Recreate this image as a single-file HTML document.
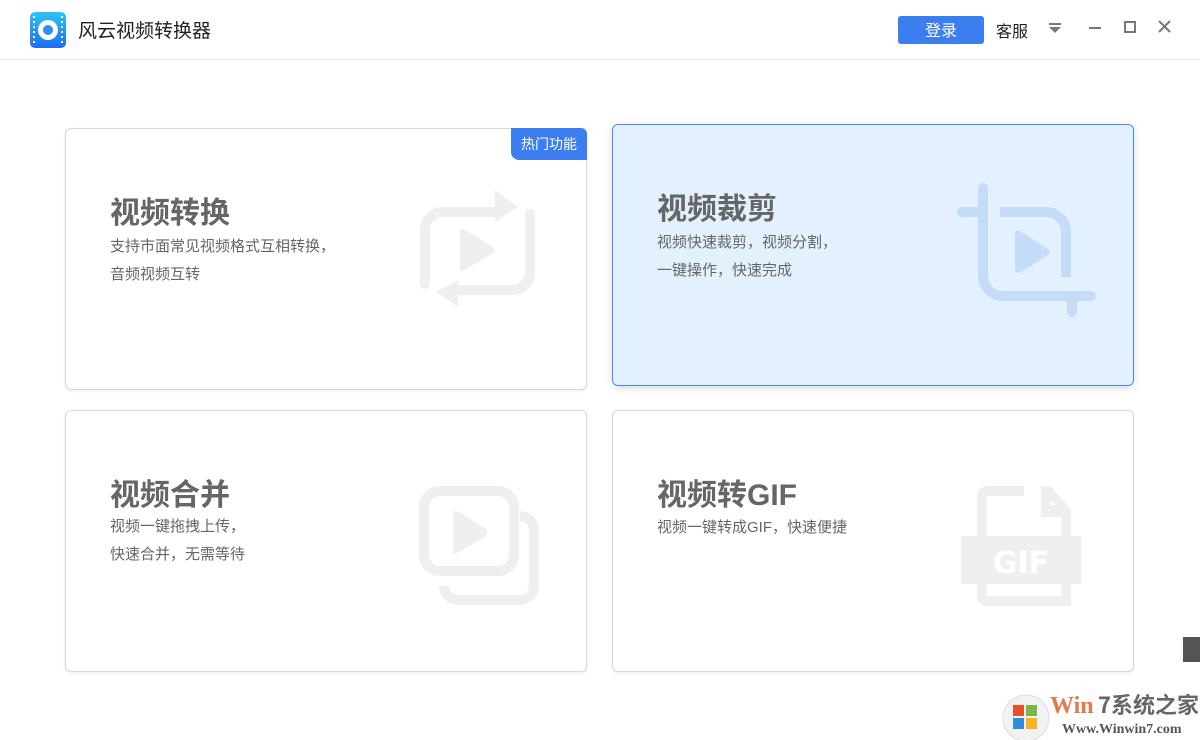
<!DOCTYPE html>
<html><head><meta charset="utf-8"><style>
*{margin:0;padding:0;box-sizing:border-box}
body{width:1200px;height:740px;background:#fff;position:relative;overflow:hidden;font-family:"Liberation Sans","Noto Sans CJK SC",sans-serif;color:#666}
.hdr{position:absolute;left:0;top:0;width:1200px;height:60px;border-bottom:1px solid #ececec}
.card{position:absolute;width:522px;height:262px;border:1px solid #d8d8d8;border-radius:6px;background:#fff;box-shadow:0 1px 3px rgba(0,0,0,.08)}
.t{position:absolute;left:44px;font-size:30px;font-weight:bold;color:#666;letter-spacing:0}
.d{position:absolute;left:44px;font-size:15px;line-height:28px;color:#666}
svg{position:absolute;left:0;top:0}
</style></head><body>
<div class="hdr"></div>
<svg width="1200" height="740">
<defs><linearGradient id="lg" x1="0" y1="0" x2="0" y2="1"><stop offset="0" stop-color="#2fc3f5"/><stop offset="1" stop-color="#1f6cf0"/></linearGradient></defs>
<rect x="30" y="12" width="36" height="36" rx="5" fill="url(#lg)"/>
<g fill="#fff"><rect x="33" y="16" width="2" height="2"/><rect x="33" y="21" width="2" height="2"/><rect x="33" y="26" width="2" height="2"/><rect x="33" y="31" width="2" height="2"/><rect x="33" y="36" width="2" height="2"/><rect x="33" y="41" width="2" height="2"/>
<rect x="61" y="16" width="2" height="2"/><rect x="61" y="21" width="2" height="2"/><rect x="61" y="26" width="2" height="2"/><rect x="61" y="31" width="2" height="2"/><rect x="61" y="36" width="2" height="2"/><rect x="61" y="41" width="2" height="2"/></g>
<circle cx="48" cy="30" r="10" fill="#fff"/><circle cx="48" cy="30" r="5" fill="#2a90f2"/>
<text x="78" y="37" font-size="19" fill="#222" font-family="Liberation Sans,Noto Sans CJK SC,sans-serif">风云视频转换器</text>
<rect x="898" y="16" width="86" height="28" rx="3" fill="#3a7ef0"/>
<text x="941" y="36" font-size="16" fill="#fff" text-anchor="middle" font-family="Noto Sans CJK SC,sans-serif">登录</text>
<text x="996" y="37" font-size="16" fill="#222" font-family="Noto Sans CJK SC,sans-serif">客服</text>
<rect x="1049" y="23" width="12" height="2" fill="#777"/><polygon points="1049,27 1061,27 1055,33" fill="#777"/>
<rect x="1089" y="27" width="12" height="2" fill="#777"/>
<rect x="1125" y="22" width="10" height="10" fill="none" stroke="#777" stroke-width="2"/>
<path d="M1159 21 L1170 32 M1170 21 L1159 32" stroke="#777" stroke-width="2"/>
</svg>

<div class="card" style="left:65px;top:128px">
<div class="t" style="top:59px">视频转换</div>
<div class="d" style="top:104px">支持市面常见视频格式互相转换，<br>音频视频互转</div>
<div style="position:absolute;right:-1px;top:-1px;width:76px;height:32px;background:#3a7ef0;border-radius:0 6px 0 8px;color:#fff;font-size:14px;line-height:32px;text-align:center">热门功能</div>
</div>
<div class="card" style="left:612px;top:124px;background:#e3f1fe;border-color:#4a8af0;box-shadow:0 2px 8px rgba(0,0,0,.15)">
<div class="t" style="top:59px">视频裁剪</div>
<div class="d" style="top:104px">视频快速裁剪，视频分割，<br>一键操作，快速完成</div>
</div>
<div class="card" style="left:65px;top:410px">
<div class="t" style="top:59px">视频合并</div>
<div class="d" style="top:102px">视频一键拖拽上传，<br>快速合并，无需等待</div>
</div>
<div class="card" style="left:612px;top:410px">
<div class="t" style="top:59px">视频转GIF</div>
<div class="d" style="top:103px">视频一键转成GIF，快速便捷</div>
</div>

<svg width="1200" height="740">
<g fill="none" stroke="#efefef" stroke-width="10" stroke-linecap="round">
<path d="M425 284 V230 a18 18 0 0 1 18 -18 H500"/>
<path d="M530 214 V272 a18 18 0 0 1 -18 18 H455"/>
</g>
<g fill="#efefef">
<polygon points="495,190 518,207 495,222"/>
<polygon points="458,280 436,292 458,307"/>
<path d="M460 232 Q460 227 465 230 L493 247 Q496 250 493 253 L465 270 Q460 273 460 268Z"/>
</g>
<g fill="none" stroke="#c4dcf8" stroke-width="10" stroke-linecap="round">
<path d="M983 188 V276 a20 20 0 0 0 20 20 H1091"/>
<path d="M962 212 H983"/>
<path d="M1000 212 H1046 a20 20 0 0 1 20 20 V277" stroke-linecap="butt"/>
<path d="M1072 298 V312"/>
</g>
<path d="M1015 235 Q1015 228 1021 232 L1048 249 Q1051 252 1048 255 L1021 272 Q1015 275 1015 268Z" fill="#c4dcf8"/>
<g fill="none" stroke="#efefef" stroke-width="10">
<rect x="424" y="491" width="90" height="80" rx="16"/>
<path d="M520 516 a14 14 0 0 1 14 14 V586 a14 14 0 0 1 -14 14 H458 a14 14 0 0 1 -14 -14"/>
</g>
<path d="M453 515 Q453 509 459 512 L486 529 Q489 533 486 536 L459 552 Q453 556 453 550Z" fill="#efefef"/>
<g fill="none" stroke="#efefef" stroke-width="10">
<path d="M1024 491 H987 a5 5 0 0 0 -5 5 V596 a5 5 0 0 0 5 5 H1066 V530"/>
</g>
<path d="M1041 486 H1050 L1071 509 V536 H1061 V517 H1041Z" fill="#efefef"/>
<polygon points="1051,500 1051,505 1057,505" fill="#fff"/>
<rect x="961" y="536" width="120" height="48" fill="#efefef"/>
<text x="1021" y="573" font-size="30" font-weight="bold" fill="#fff" text-anchor="middle" font-family="DejaVu Sans,sans-serif">GIF</text>
<rect x="1183" y="637" width="17" height="25" fill="#555"/>
<circle cx="1026" cy="718" r="23" fill="#f2f2f2" stroke="#ddd"/>
<rect x="1013" y="705" width="11" height="11" fill="#e8502a"/><rect x="1026" y="705" width="11" height="11" fill="#7ab648"/>
<rect x="1013" y="718" width="11" height="11" fill="#2d8de0"/><rect x="1026" y="718" width="11" height="11" fill="#f5b623"/>
<text x="1050" y="713" font-size="24" font-weight="bold" fill="#e07a4a" font-family="Liberation Serif,serif">Win</text>
<text x="1098" y="713" font-size="22" font-weight="bold" fill="#666" font-family="Noto Sans CJK SC,sans-serif">7系统之家</text>
<text x="1062" y="733" font-size="14" font-weight="bold" fill="#555" font-family="Liberation Serif,serif">Www.Winwin7.com</text>
</svg>
</body></html>
